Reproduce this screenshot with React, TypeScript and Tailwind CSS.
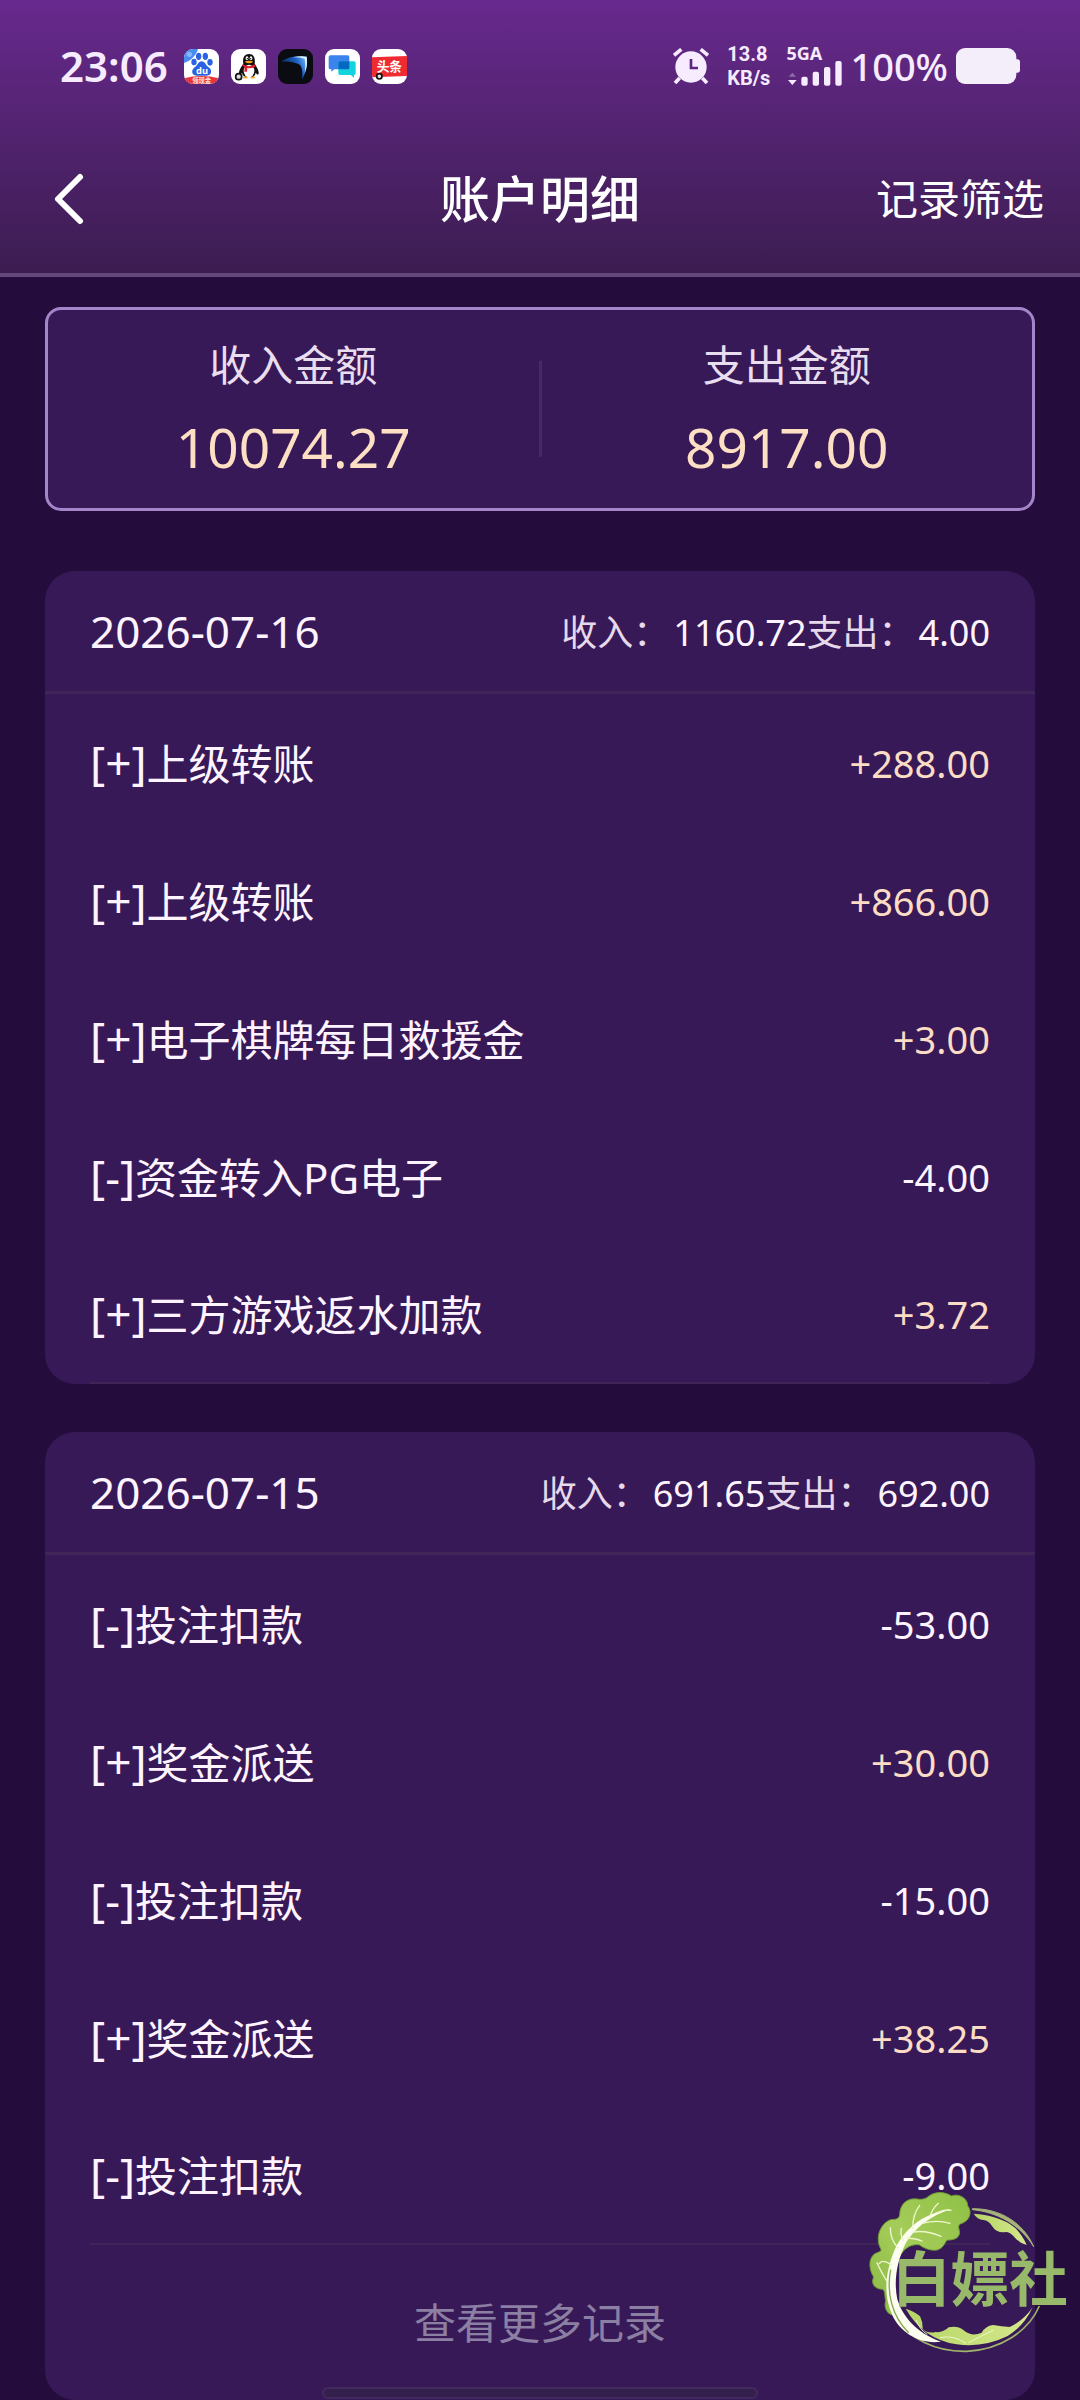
interface RecordItem {
  type: "+" | "-"
  title: string
  amount: string
}

interface DayGroup {
  date: string
  income: string
  expense: string
  hasMore?: boolean
  items: RecordItem[]
}

const groups: DayGroup[] = [
  {
    date: "2026-07-16",
    income: "1160.72",
    expense: "4.00",
    items: [
      { type: "+", title: "上级转账", amount: "288.00" },
      { type: "+", title: "上级转账", amount: "866.00" },
      { type: "+", title: "电子棋牌每日救援金", amount: "3.00" },
      { type: "-", title: "资金转入PG电子", amount: "4.00" },
      { type: "+", title: "三方游戏返水加款", amount: "3.72" },
    ],
  },
  {
    date: "2026-07-15",
    income: "691.65",
    expense: "692.00",
    hasMore: true,
    items: [
      { type: "-", title: "投注扣款", amount: "53.00" },
      { type: "+", title: "奖金派送", amount: "30.00" },
      { type: "-", title: "投注扣款", amount: "15.00" },
      { type: "+", title: "奖金派送", amount: "38.25" },
      { type: "-", title: "投注扣款", amount: "9.00" },
    ],
  },
]

function BaiduIcon() {
  return (
    <svg viewBox="0 0 105 105" className="size-[35px] rounded-[9px] bg-white" aria-hidden="true">
      <path d="M0 0H42C36 20 20 36 0 42Z" fill="#4a8df0" />
      <circle cx="16" cy="16" r="8" fill="#86b6fa" />
      <g fill="#2b62e3">
        <ellipse cx="30" cy="39" rx="8" ry="10" />
        <ellipse cx="44" cy="22" rx="8" ry="11" />
        <ellipse cx="64" cy="22" rx="8" ry="11" />
        <ellipse cx="78" cy="40" rx="8" ry="10" />
        <path d="M53 37C63 37 65 49 74 55C86 63 83 80 68 80H38C23 80 20 64 32 55C41 49 43 37 53 37Z" />
      </g>
      <text x="54" y="74" textAnchor="middle" fontSize="28" fontWeight="700" fill="#fff">du</text>
      <path d="M0 88Q52 74 105 88V105H0Z" fill="#e8363c" />
      <text x="53" y="101" textAnchor="middle" fontSize="19" fontWeight="700" fill="#ffe3e0">领现金</text>
    </svg>
  )
}

function QQIcon() {
  return (
    <svg viewBox="0 0 105 105" className="size-[35px] rounded-[9px] bg-white" aria-hidden="true">
      <path d="M54 15C71 15 73 31 71 45C79 56 86 69 82 76C79 79 76 73 74 71C73 78 69 82 65 84H43C37 81 34 77 33 71C29 77 25 79 24 74C23 66 29 55 37 45C34 28 39 15 54 15Z" fill="#111" />
      <ellipse cx="54" cy="66" rx="16" ry="19" fill="#fff" />
      <ellipse cx="48" cy="28" rx="4" ry="6" fill="#fff" />
      <ellipse cx="60" cy="28" rx="4" ry="6" fill="#fff" />
      <circle cx="49" cy="29" r="2" />
      <circle cx="59" cy="29" r="2" />
      <path d="M41 38Q54 33 67 38Q54 47 41 38Z" fill="#f7a623" />
      <path d="M35 46Q54 57 73 46V53Q59 59 49 57L48 68H40L41 54Q37 52 34 50Z" fill="#e31e2d" />
      <path d="M36 84Q42 79 51 86Q48 89 37 88ZM57 86Q66 79 74 85Q71 89 59 88Z" fill="#f7a623" />
      <circle cx="23" cy="83" r="9" fill="#ddd" stroke="#111" strokeWidth="5" />
    </svg>
  )
}

function WingIcon() {
  return (
    <svg viewBox="0 0 105 105" className="size-[35px] rounded-[9px] bg-[#0b0c12]" aria-hidden="true">
      <defs>
        <linearGradient id="wing" x1="0" y1="0.4" x2="1" y2="0">
          <stop offset="0" stopColor="#081f4c" />
          <stop offset="0.6" stopColor="#1d63c8" />
          <stop offset="1" stopColor="#8cc8fa" />
        </linearGradient>
      </defs>
      <path d="M8 38Q40 17 86 23Q92 55 72 91Q76 62 66 48Q47 35 8 38Z" fill="url(#wing)" />
      <path d="M44 25Q66 20 86 23Q90 47 80 73Q84 46 80 29Q64 24 44 25Z" fill="#dff3ff" />
    </svg>
  )
}

function ChatIcon() {
  return (
    <svg viewBox="0 0 105 105" className="size-[35px] rounded-[9px] bg-white" aria-hidden="true">
      <path d="M16 19H68Q73 19 73 24V56Q73 61 68 61H28L19 68V61H16Q11 61 11 56V24Q11 19 16 19Z" fill="#3d83ee" />
      <path d="M45 37H87Q92 37 92 42V73Q92 78 87 78V86L77 78H45Q40 78 40 73V42Q40 37 45 37Z" fill="#13d3dc" />
      <path d="M45 37H73V56Q73 61 68 61H40V42Q40 37 45 37Z" fill="#0768c4" />
    </svg>
  )
}

function ToutiaoIcon() {
  return (
    <svg viewBox="0 0 105 105" className="size-[35px] rounded-[9px] bg-white" aria-hidden="true">
      <path d="M0 25L105 21V81L0 85Z" fill="#ee2b31" />
      <text x="52" y="67" textAnchor="middle" fontSize="38" fontWeight="700" fill="#fff">头条</text>
      <circle cx="22" cy="82" r="8" fill="#e5e0dd" stroke="#111" strokeWidth="5" />
    </svg>
  )
}

function StatusBar() {
  return (
    <div className="flex h-[132px] items-center justify-between px-[60px] font-semibold text-[#f7ebff]">
      <div className="flex items-center gap-3">
        <span className="mr-1 text-[42px] leading-none">23:06</span>
        <BaiduIcon />
        <QQIcon />
        <WingIcon />
        <ChatIcon />
        <ToutiaoIcon />
      </div>
      <div className="flex items-center">
        <svg viewBox="0 0 108 108" className="mr-[18px] size-9" fill="none" stroke="#f7ebff" aria-label="闹钟">
          <circle cx="54" cy="57" r="47" fill="#f7ebff" stroke="none" />
          <path d="M3 22L25 4M83 4L105 22" strokeWidth="11" />
          <path d="M20 90L6 105M88 90L102 105" strokeWidth="11" />
          <path d="M54 33V60H75" stroke="#5c2580" strokeWidth="8" />
        </svg>
        <div className="mr-4 flex flex-col font-['Roboto',sans-serif] text-[20px] leading-6 font-bold">
          <span>13.8</span>
          <span>KB/s</span>
        </div>
        <div className="mr-2 flex w-14 flex-col">
          <span className="text-[18px] leading-[14px] font-bold">5GA</span>
          <svg viewBox="0 0 168 78" className="h-[26px] w-14" fill="#f7ebff" aria-hidden="true">
            <path d="M8 50L19 38L30 50Z" opacity="0.35" />
            <path d="M6 60H32L19 75Z" />
            <rect x="46" y="50" width="19" height="27" rx="6" />
            <rect x="80" y="35" width="19" height="42" rx="6" />
            <rect x="114" y="21" width="19" height="56" rx="6" />
            <rect x="148" y="3" width="19" height="74" rx="6" />
          </svg>
        </div>
        <span className="mr-2 text-[38px] leading-none font-medium">100%</span>
        <svg viewBox="0 0 192 108" className="h-9 w-16" fill="#f4eefa" aria-label="电量">
          <rect width="181" height="108" rx="27" />
          <rect x="170" y="34" width="22" height="40" rx="8" />
        </svg>
      </div>
    </div>
  )
}

function Summary() {
  return (
    <section className="mx-[45px] mt-[30px] grid h-[204px] grid-cols-[1fr_3px_1fr] items-center rounded-2xl border-[3px] border-[#a585ca] bg-[#381957] text-center">
      <div>
        <p className="text-[42px] leading-[60px] text-[#e9deef]">收入金额</p>
        <p className="mt-4 text-[55px] leading-[72px] text-[#fde0c4]">10074.27</p>
      </div>
      <div className="h-24 bg-[#472965]" />
      <div>
        <p className="text-[42px] leading-[60px] text-[#e9deef]">支出金额</p>
        <p className="mt-4 text-[55px] leading-[72px] text-[#fde0c4]">8917.00</p>
      </div>
    </section>
  )
}

function DayCard({ group }: { group: DayGroup }) {
  return (
    <section className="rounded-[30px] bg-[#381957]">
      <div className="flex h-[123px] items-center justify-between border-b-[3px] border-[#3f2558] px-[45px]">
        <h2 className="text-[44px] text-[#fdf4ff]">{group.date}</h2>
        <p className="flex pt-1 text-[36px] text-[#fdf4ff]">
          <span className="mr-1 text-[#e6d9ec]">收入：</span>
          <span>{group.income}</span>
          <span className="mr-1 text-[#e6d9ec]">支出：</span>
          <span>{group.expense}</span>
        </p>
      </div>
      <ul className="mx-[45px]">
        {group.items.map((item, i) => (
          <li key={i} className="flex h-[138px] items-center justify-between border-[#3f2558] last:border-b-2">
            <span className="text-[42px] leading-[60px] text-[#fdf4ff]">
              <span className="text-[46px]">[{item.type}]</span>
              {item.title}
            </span>
            <span className={item.type === "+" ? "text-[38px] text-[#fbdcc4]" : "text-[38px] text-[#fdf4ff]"}>
              {item.type}{item.amount}
            </span>
          </li>
        ))}
      </ul>
      {group.hasMore && (
        <button type="button" className="h-[155px] w-full text-[42px] text-[#8b7fa3]">
          查看更多记录
        </button>
      )}
    </section>
  )
}

// cabbage badge floating over the list
function CabbageBadge() {
  return (
    <svg viewBox="0 0 720 780" className="pointer-events-none absolute right-0 bottom-0 h-[260px] w-60" fill="none" aria-label="白嫖社">
      <defs>
        <linearGradient id="leaf" x1="1" y1="0" x2="0" y2="1">
          <stop offset="0" stopColor="#8fc046" />
          <stop offset="0.5" stopColor="#a4cc58" />
          <stop offset="1" stopColor="#8dba48" />
        </linearGradient>
        <linearGradient id="rim" x1="0" y1="0" x2="1" y2="0">
          <stop offset="0" stopColor="#b5d566" />
          <stop offset="1" stopColor="#d5e88c" />
        </linearGradient>
      </defs>
      {/* outer rings */}
      <path d="M397 206C480 205 550 248 581 320C540 254 472 216 397 209Z" fill="#a5b478" stroke="#a5b478" strokeWidth="3" />
      <path d="M160 520C205 600 290 636 380 634C480 630 565 575 598 498" stroke="#a0b56c" strokeWidth="5" />
      {/* inner leaf edges */}
      <path d="M401 221Q436 223 462 232Q500 243 525 263Q548 286 560 315Q537 309 520 288Q505 272 492 277Q468 278 456 258Q446 242 430 240Q412 239 401 221Z" fill="url(#rim)" />
      <path d="M197 506Q224 514 240 529Q249 547 248 567Q264 582 287 576Q309 579 326 562Q352 556 370 570Q395 592 425 578Q436 558 459 555Q486 560 509 561Q551 542 578 502Q552 558 503 588Q430 624 350 613Q250 598 197 506Z" fill="url(#rim)" />
      <path d="M300 593Q340 584 378 610M385 608Q420 590 462 570M228 540Q238 567 262 584" stroke="#eff6c4" strokeWidth="3" />
      {/* big leaf */}
      <path d="M164 525C145 527 130 506 137 482C133 465 137 456 128 448C103 447 92 430 101 411C88 390 84 361 101 344C111 335 128 337 122 326C105 296 119 251 152 239C170 238 177 237 179 224C180 193 201 173 231 177C249 180 257 176 267 168C292 151 319 158 334 168C360 158 384 179 383 197C399 219 387 244 361 252C349 258 363 273 357 285C351 300 332 299 320 301C311 317 306 326 291 330C270 333 251 324 239 315C222 311 205 318 192 331C168 360 157 388 161 430Z" fill="url(#leaf)" stroke="#6f9f35" strokeWidth="3" />
      {/* rib */}
      <path d="M333 207C275 226 224 262 196 312C172 362 160 420 172 478C188 530 230 580 303 605C241 614 182 580 157 526C127 461 138 390 165 327C194 265 253 218 333 207Z" fill="#fbfdee" />
      <g stroke="#eff6ce" strokeWidth="4" strokeLinecap="round">
        <path d="M218 267Q217 225 239 196" />
        <path d="M270 231Q276 207 295 190" />
        <path d="M249 249Q292 239 330 250" />
        <path d="M220 276Q259 270 303 289" />
        <path d="M287 220Q318 207 333 211" />
        <path d="M174 323Q151 300 151 263" />
        <path d="M154 374Q126 356 118 371" />
        <path d="M141 423Q127 403 111 368" />
        <path d="M190 302Q180 284 184 265" />
        <path d="M201 294Q230 296 246 303" />
      </g>
      <path d="M152 389C138 459 157 531 206 578" stroke="#85aa4e" strokeWidth="4" />
      <text x="156" y="482" fontSize="176" fontWeight="700" fill="#98b86a">白嫖社</text>
    </svg>
  )
}

export default function App() {
  return (
    <div className="relative min-h-screen overflow-hidden bg-[#240d3d] font-['Noto_Sans','Noto_Sans_CJK_SC',sans-serif]">
      <header className="border-b-4 border-[#66477c] bg-linear-to-b from-[#68298e] to-[#3b1c50] bg-origin-border">
        <StatusBar />
        <nav className="grid h-[141px] grid-cols-3 items-center px-9 pb-2 text-white">
          <button type="button" aria-label="返回" className="w-fit pl-3.5">
            <svg viewBox="0 0 36 54" className="h-[54px] w-9" fill="none" stroke="currentColor" strokeWidth="6" strokeLinecap="round" strokeLinejoin="round">
              <path d="M30 5L8 27L30 49" />
            </svg>
          </button>
          <h1 className="text-center text-[50px] leading-none font-medium">账户明细</h1>
          <button type="button" className="justify-self-end text-[42px] leading-none">记录筛选</button>
        </nav>
      </header>
      <main>
        <Summary />
        <div className="mx-[45px] mt-[60px] flex flex-col gap-12">
          {groups.map(group => (
            <DayCard key={group.date} group={group} />
          ))}
        </div>
      </main>
      <CabbageBadge />
      {/* gesture bar */}
      <div className="absolute bottom-px left-1/2 h-3 w-[436px] -translate-x-1/2 rounded-full border-2 border-[#44295f] bg-[#33204c]" />
    </div>
  )
}
